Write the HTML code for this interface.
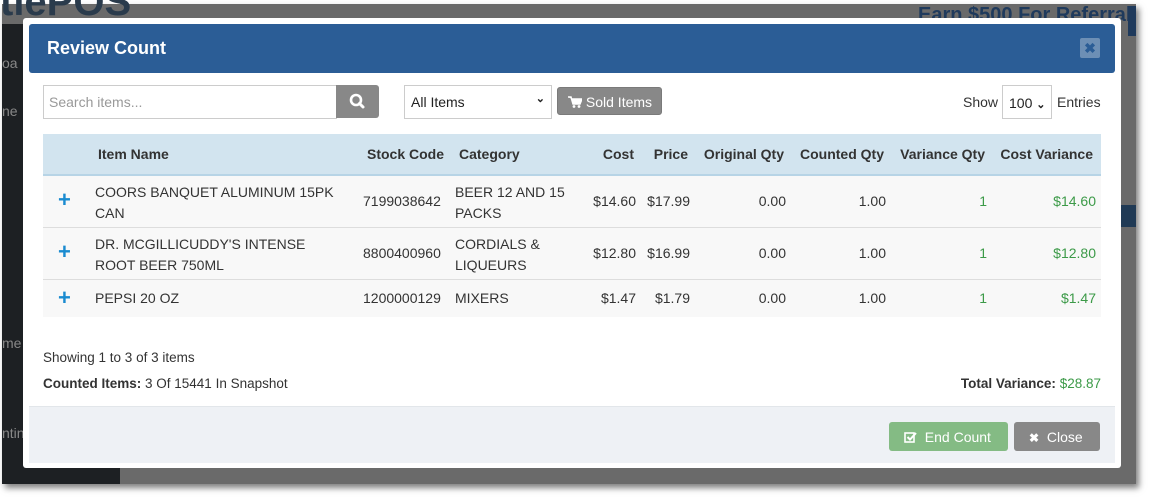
<!DOCTYPE html>
<html><head><meta charset="utf-8"><style>
*{box-sizing:border-box;margin:0;padding:0}
body{width:1153px;height:499px;background:#fff;position:relative;overflow:hidden;font-family:"Liberation Sans",sans-serif;font-size:14px;color:#333}
.a{position:absolute;white-space:nowrap}
.bg{position:absolute;left:2px;top:4px;width:1134px;height:480px;background:#6a6a6a;box-shadow:3px 4px 6px rgba(0,0,0,.5)}
.side{position:absolute;left:2px;top:24px;width:118px;height:460px;background:#1d2023}
.modal{position:absolute;left:23px;top:18px;width:1098px;height:450px;background:#fff;border-radius:3px}
.hdr{position:absolute;left:29px;top:24px;width:1086px;height:49px;background:#2b5d96;border-radius:3px}
.th{font-weight:bold;color:#333}
.r{text-align:right}
.g{color:#3c9a48}
.plus{color:#1a8bd0;font-weight:bold;font-size:22px}
</style></head><body>
<div class="bg"></div>
<div class="side"></div>
<div class="a" style="left:0;top:-20px;font-size:40px;font-weight:bold;color:#2a3b4c">tlePOS</div>
<div class="a" style="left:918px;top:4px;font-size:20px;font-weight:bold;color:#1f3a5c">Earn $500 For Referral</div>
<div class="a" style="left:1128px;top:6px;width:8px;height:30px;background:#1f3a5c"></div>
<div class="a" style="left:2px;top:55px;color:#888">oa</div>
<div class="a" style="left:2px;top:103px;color:#888">ne</div>
<div class="a" style="left:2px;top:335px;color:#888">me</div>
<div class="a" style="left:2px;top:425px;color:#888">ntin</div>
<div class="a" style="left:1121px;top:205px;width:15px;height:22px;background:#203a55"></div>

<div class="modal"></div>
<div class="hdr"></div>
<div class="a" style="left:47px;top:38px;font-size:18px;font-weight:bold;color:#fff">Review Count</div>
<div class="a" style="left:1080px;top:38px;width:20px;height:20px;background:#6d8fb5;border-radius:2px;color:#2b5d96;font-weight:bold;font-size:14px;text-align:center;line-height:20px">✖</div>

<div class="a" style="left:43px;top:85px;width:294px;height:34px;border:1px solid #ccc;color:#999;padding:8px 5px;font-size:14px">Search items...</div>
<div class="a" style="left:336px;top:85px;width:43px;height:33px;background:#888;border-radius:0 3px 3px 0">
<svg width="43" height="33"><circle cx="20" cy="15" r="5" fill="none" stroke="#fff" stroke-width="2.6"/><line x1="23.5" y1="18.5" x2="27" y2="22" stroke="#fff" stroke-width="3" stroke-linecap="round"/></svg></div>
<div class="a" style="left:404px;top:85px;width:148px;height:34px;border:1px solid #ccc;padding:8px 6px;color:#222">All Items<span style="position:absolute;right:6px;top:6px;font-size:11px;font-weight:bold">&#x2304;</span></div>
<div class="a" style="left:557px;top:87px;width:105px;height:28px;background:#888;border:1px solid #7a7a7a;border-radius:3px;color:#fff;padding:6px 0 0 10px">
<svg width="14" height="12" style="vertical-align:-1px"><path d="M0 1h3l2 7h7l2-5H4" fill="#fff" stroke="#fff" stroke-width="1.5"/><circle cx="6" cy="10.5" r="1.4" fill="#fff"/><circle cx="11" cy="10.5" r="1.4" fill="#fff"/></svg> Sold Items</div>
<div class="a" style="left:963px;top:94px;color:#333">Show</div>
<div class="a" style="left:1002px;top:85px;width:50px;height:34px;border:1px solid #ccc;padding:9px 6px;color:#222">100 <span style="font-size:11px;font-weight:bold">&#x2304;</span></div>
<div class="a" style="left:1057px;top:94px">Entries</div>

<div class="a" style="left:43px;top:134px;width:1058px;height:42px;background:#d2e4ef;border-bottom:2px solid #b7d4e6"></div>
<div class="a" style="left:43px;top:176px;width:1058px;height:141px;background:#f8f8f8"></div>
<div class="a" style="left:43px;top:227px;width:1058px;height:1px;background:#ddd"></div>
<div class="a" style="left:43px;top:279px;width:1058px;height:1px;background:#ddd"></div>

<div class="a th" style="left:98px;top:146px">Item Name</div>
<div class="a th" style="left:367px;top:146px">Stock Code</div>
<div class="a th" style="left:459px;top:146px">Category</div>
<div class="a th r" style="right:519px;top:146px">Cost</div>
<div class="a th r" style="right:465px;top:146px">Price</div>
<div class="a th r" style="right:369px;top:146px">Original Qty</div>
<div class="a th r" style="right:269px;top:146px">Counted Qty</div>
<div class="a th r" style="right:168px;top:146px">Variance Qty</div>
<div class="a th r" style="right:60px;top:146px">Cost Variance</div>

<div class="a plus" style="left:58px;top:187px">+</div>
<div class="a" style="left:95px;top:182px;line-height:21px">COORS BANQUET ALUMINUM 15PK<br>CAN</div>
<div class="a" style="left:363px;top:193px">7199038642</div>
<div class="a" style="left:455px;top:182px;line-height:21px">BEER 12 AND 15<br>PACKS</div>
<div class="a r" style="right:517px;top:193px">$14.60</div>
<div class="a r" style="right:463px;top:193px">$17.99</div>
<div class="a r" style="right:367px;top:193px">0.00</div>
<div class="a r" style="right:267px;top:193px">1.00</div>
<div class="a r g" style="right:166px;top:193px">1</div>
<div class="a r g" style="right:57px;top:193px">$14.60</div>

<div class="a plus" style="left:58px;top:239px">+</div>
<div class="a" style="left:95px;top:234px;line-height:21px">DR. MCGILLICUDDY'S INTENSE<br>ROOT BEER 750ML</div>
<div class="a" style="left:363px;top:245px">8800400960</div>
<div class="a" style="left:455px;top:234px;line-height:21px">CORDIALS &amp;<br>LIQUEURS</div>
<div class="a r" style="right:517px;top:245px">$12.80</div>
<div class="a r" style="right:463px;top:245px">$16.99</div>
<div class="a r" style="right:367px;top:245px">0.00</div>
<div class="a r" style="right:267px;top:245px">1.00</div>
<div class="a r g" style="right:166px;top:245px">1</div>
<div class="a r g" style="right:57px;top:245px">$12.80</div>

<div class="a plus" style="left:58px;top:285px">+</div>
<div class="a" style="left:95px;top:290px">PEPSI 20 OZ</div>
<div class="a" style="left:363px;top:290px">1200000129</div>
<div class="a" style="left:455px;top:290px">MIXERS</div>
<div class="a r" style="right:517px;top:290px">$1.47</div>
<div class="a r" style="right:463px;top:290px">$1.79</div>
<div class="a r" style="right:367px;top:290px">0.00</div>
<div class="a r" style="right:267px;top:290px">1.00</div>
<div class="a r g" style="right:166px;top:290px">1</div>
<div class="a r g" style="right:57px;top:290px">$1.47</div>

<div class="a" style="left:43px;top:350px;font-size:13.5px">Showing 1 to 3 of 3 items</div>
<div class="a" style="left:43px;top:376px;font-size:13.5px"><b>Counted Items:</b> 3 Of 15441 In Snapshot</div>
<div class="a r" style="right:52px;top:376px;font-size:13.5px"><b>Total Variance:</b> <span class="g">$28.87</span></div>

<div class="a" style="left:29px;top:406px;width:1086px;height:57px;background:#eef1f5;border-top:1px solid #e2e6ea"></div>
<div class="a" style="left:889px;top:422px;width:119px;height:29px;background:#84bb84;border-radius:3px;color:#fff;padding:7px 0 0 15px">
<svg width="13" height="12" style="vertical-align:-1px"><rect x="1" y="2" width="9" height="9" fill="none" stroke="#fff" stroke-width="1.6"/><path d="M3.5 6l2.5 2.5L12 2" fill="none" stroke="#fff" stroke-width="2"/></svg>&nbsp; End Count</div>
<div class="a" style="left:1014px;top:422px;width:86px;height:29px;background:#888;border-radius:3px;color:#fff;padding:7px 0 0 15px"><b style="font-size:12px">✖</b>&nbsp; Close</div>
</body></html>
